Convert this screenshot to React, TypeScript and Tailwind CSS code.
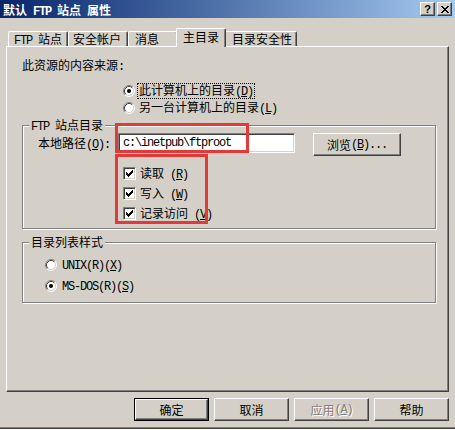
import type { ReactNode } from 'react';

// Latin runs inside the dialog: half-width, like the bitmap font of the original
function E({ children }: { children: ReactNode }) {
  return <span className="font-['Liberation_Mono',monospace] text-[12px] tracking-[-1.2px] whitespace-pre">{children}</span>;
}

function Radio({ checked }: { checked?: boolean }) {
  return (
    <svg width="12" height="12" viewBox="0 0 12 12" className="shrink-0">
      <circle cx="6" cy="6" r="5" fill="#fff" />
      <path d="M2.11 9.89 A5.5 5.5 0 0 1 9.89 2.11" fill="none" stroke="#808080" />
      <path d="M9.89 2.11 A5.5 5.5 0 0 1 2.11 9.89" fill="none" stroke="#fff" />
      <path d="M2.82 9.18 A4.5 4.5 0 0 1 9.18 2.82" fill="none" stroke="#404040" />
      <path d="M9.18 2.82 A4.5 4.5 0 0 1 2.82 9.18" fill="none" stroke="#d4d0c8" />
      {checked && <circle cx="6" cy="6" r="2" fill="#000" />}
    </svg>
  );
}

function Check() {
  const cols = [2, 3, 4, 3, 2, 1, 0];
  return (
    <div className="w-[13px] h-[13px] shrink-0 bg-white border border-t-[#808080] border-l-[#808080] border-r-white border-b-white shadow-[inset_1px_1px_0_#404040,inset_-1px_-1px_0_#d4d0c8]">
      <svg width="11" height="11" viewBox="0 0 11 11" shapeRendering="crispEdges">
        {cols.map((y, i) => (
          <rect key={i} x={2 + i} y={y + 2} width="1" height="3" fill="#000" />
        ))}
      </svg>
    </div>
  );
}

function Button({ children, def, disabled }: { children: ReactNode; def?: boolean; disabled?: boolean }) {
  const face = (
    <div
      className={`w-full h-full flex items-center justify-center bg-[#d4d0c8] border border-t-white border-l-white border-r-[#404040] border-b-[#404040] shadow-[inset_-1px_-1px_0_#808080] ${
        disabled ? 'text-[#808080] [text-shadow:1px_1px_0_#fff]' : ''
      }`}
    >
      {children}
    </div>
  );
  if (def) return <div className="w-[75px] h-[23px] border border-black">{face}</div>;
  return <div className="w-[75px] h-[23px]">{face}</div>;
}

export default function App() {
  return (
    <div className="relative w-[455px] h-[430px] overflow-hidden bg-[#d4d0c8] flex flex-col font-['Noto_Sans_CJK_SC',sans-serif] text-[12px] leading-[14px] text-black">
      {/* Title bar */}
      <div className="h-[18px] shrink-0 flex items-start justify-between pl-[3px] pr-[3px] bg-gradient-to-r from-[#0a246a] to-[#a6caf0]">
        <span className="mt-[3px] font-bold text-white">
          默认<E> FTP </E>站点<E> </E>属性
        </span>
        <div className="mt-[2px] flex gap-[2px]">
          <div className="w-[15px] h-[14px] flex items-center justify-center bg-[#d4d0c8] border border-t-white border-l-white border-r-[#404040] border-b-[#404040] shadow-[inset_-1px_-1px_0_#808080] font-['Liberation_Sans',sans-serif] font-bold text-[11px] leading-none">
            ?
          </div>
          <div className="w-[15px] h-[14px] flex items-center justify-center bg-[#d4d0c8] border border-t-white border-l-white border-r-[#404040] border-b-[#404040] shadow-[inset_-1px_-1px_0_#808080]">
            <svg width="8" height="7" viewBox="0 0 8 7" shapeRendering="crispEdges">
              <path d="M0 0h2v1h-2zM6 0h2v1h-2zM1 1h2v1h-2zM5 1h2v1h-2zM2 2h4v1h-4zM3 3h2v1h-2zM2 4h4v1h-4zM1 5h2v1h-2zM5 5h2v1h-2zM0 6h2v1h-2zM6 6h2v1h-2z" fill="#000" />
            </svg>
          </div>
        </div>
      </div>

      <div className="px-[6px] flex flex-col">
        {/* Tabs */}
        <div className="mt-[10px] h-[18px] flex items-end pl-[2px]">
          <div className="w-[60px] h-[15px] pl-[5px] border-t border-l border-white border-r border-r-[#404040] shadow-[inset_-1px_0_0_#808080] rounded-t-[2px]">
            <E>FTP </E>站点
          </div>
          <div className="w-[60px] h-[15px] pl-[4px] border-t border-l border-white border-r border-r-[#404040] shadow-[inset_-1px_0_0_#808080] rounded-t-[2px]">
            安全帐户
          </div>
          <div className="w-[50px] h-[15px] pl-[6px] border-t border-l border-white border-r border-r-[#404040] shadow-[inset_-1px_0_0_#808080] rounded-t-[2px]">
            消息
          </div>
          <div className="relative z-10 -mx-[2px] -mb-[1px] w-[50px] h-[19px] pl-[6px] pt-[1px] bg-[#d4d0c8] border-t border-l border-white border-r border-r-[#404040] shadow-[inset_-1px_0_0_#808080] rounded-t-[2px]">
            主目录
          </div>
          <div className="w-[73px] h-[15px] pl-[7px] border-t border-l border-white border-r border-r-[#404040] shadow-[inset_-1px_0_0_#808080] rounded-t-[2px]">
            目录安全性
          </div>
        </div>

        {/* Tab page */}
        <div className="h-[346px] flex flex-col border-t border-l border-white border-r border-b border-r-[#404040] border-b-[#404040] shadow-[inset_-1px_-1px_0_#808080]">
          <div className="mt-[11px] ml-[15px]">此资源的内容来源<E>:</E></div>

          <div className="mt-[10px] ml-[116px] h-[14px] flex items-center">
            <Radio checked />
            <span className="ml-[2px] px-[1px] leading-[12px] border border-dotted border-black">
              此计算机上的目录<E>(<u>D</u>)</E>
            </span>
          </div>
          <div className="mt-[3px] ml-[116px] h-[14px] flex items-center">
            <Radio />
            <span className="ml-[2px] px-[1px] leading-[12px] border border-transparent">
              另一台计算机上的目录<E>(<u>L</u>)</E>
            </span>
          </div>

          {/* FTP 站点目录 */}
          <div className="relative mt-[10px] ml-[15px] w-[414px] h-[104px] border border-[#808080] shadow-[inset_1px_1px_0_#fff,1px_1px_0_#fff] flex flex-col">
            <span className="absolute -top-[8px] left-[6px] px-[2px] bg-[#d4d0c8]">
              <E>FTP </E>站点目录
            </span>
            <div className="mt-[7px] flex items-start">
              <span className="ml-[15px] mt-[3px] w-[80px]">
                本地路径<E>(<u>O</u>):</E>
              </span>
              <div className="w-[177px] h-[20px] pl-[4px] flex items-center bg-white border border-t-[#808080] border-l-[#808080] border-r-white border-b-white shadow-[inset_1px_1px_0_#404040,inset_-1px_-1px_0_#d4d0c8]">
                <E>c:\inetpub\ftproot</E>
              </div>
              <div className="ml-[18px] w-[88px] h-[23px] flex items-center justify-center bg-[#d4d0c8] border border-t-white border-l-white border-r-[#404040] border-b-[#404040] shadow-[inset_-1px_-1px_0_#808080]">
                浏览<E>(<u>B</u>)...</E>
              </div>
            </div>
            <div className="mt-[11px] ml-[100px] flex flex-col gap-[7px]">
              <div className="h-[13px] flex items-center">
                <Check />
                <span className="ml-[4px]">读取<E> (<u>R</u>)</E></span>
              </div>
              <div className="h-[13px] flex items-center">
                <Check />
                <span className="ml-[4px]">写入<E> (<u>W</u>)</E></span>
              </div>
              <div className="h-[13px] flex items-center">
                <Check />
                <span className="ml-[4px]">记录访问<E> (<u>V</u>)</E></span>
              </div>
            </div>
          </div>

          {/* 目录列表样式 */}
          <div className="relative mt-[13px] ml-[15px] w-[414px] h-[61px] border border-[#808080] shadow-[inset_1px_1px_0_#fff,1px_1px_0_#fff] flex flex-col">
            <span className="absolute -top-[8px] left-[6px] px-[2px] bg-[#d4d0c8]">目录列表样式</span>
            <div className="mt-[16px] ml-[22px] h-[12px] flex items-center">
              <Radio />
              <span className="ml-[5px]"><E>UNIX(R)(<u>X</u>)</E></span>
            </div>
            <div className="mt-[9px] ml-[22px] h-[12px] flex items-center">
              <Radio checked />
              <span className="ml-[5px]"><E>MS-DOS(R)(<u>S</u>)</E></span>
            </div>
          </div>
        </div>

        {/* Dialog buttons */}
        <div className="mt-[6px] flex justify-end gap-[5px]">
          <Button def>确定</Button>
          <Button>取消</Button>
          <Button disabled>
            应用<E>(<u>A</u>)</E>
          </Button>
          <Button>帮助</Button>
        </div>
      </div>

      <div className="mt-[6px] h-[1px] bg-[#808080]" />
      <div className="h-[1px] bg-[#404040]" />
      <div className="flex-1 bg-white" />

      {/* red highlight annotations */}
      <div className="absolute left-[115px] top-[123px] w-[134px] h-[30px] border-[3px] border-[#e53838]" />
      <div className="absolute left-[115px] top-[154px] w-[93px] h-[70px] border-[3px] border-[#e53838]" />
    </div>
  );
}
